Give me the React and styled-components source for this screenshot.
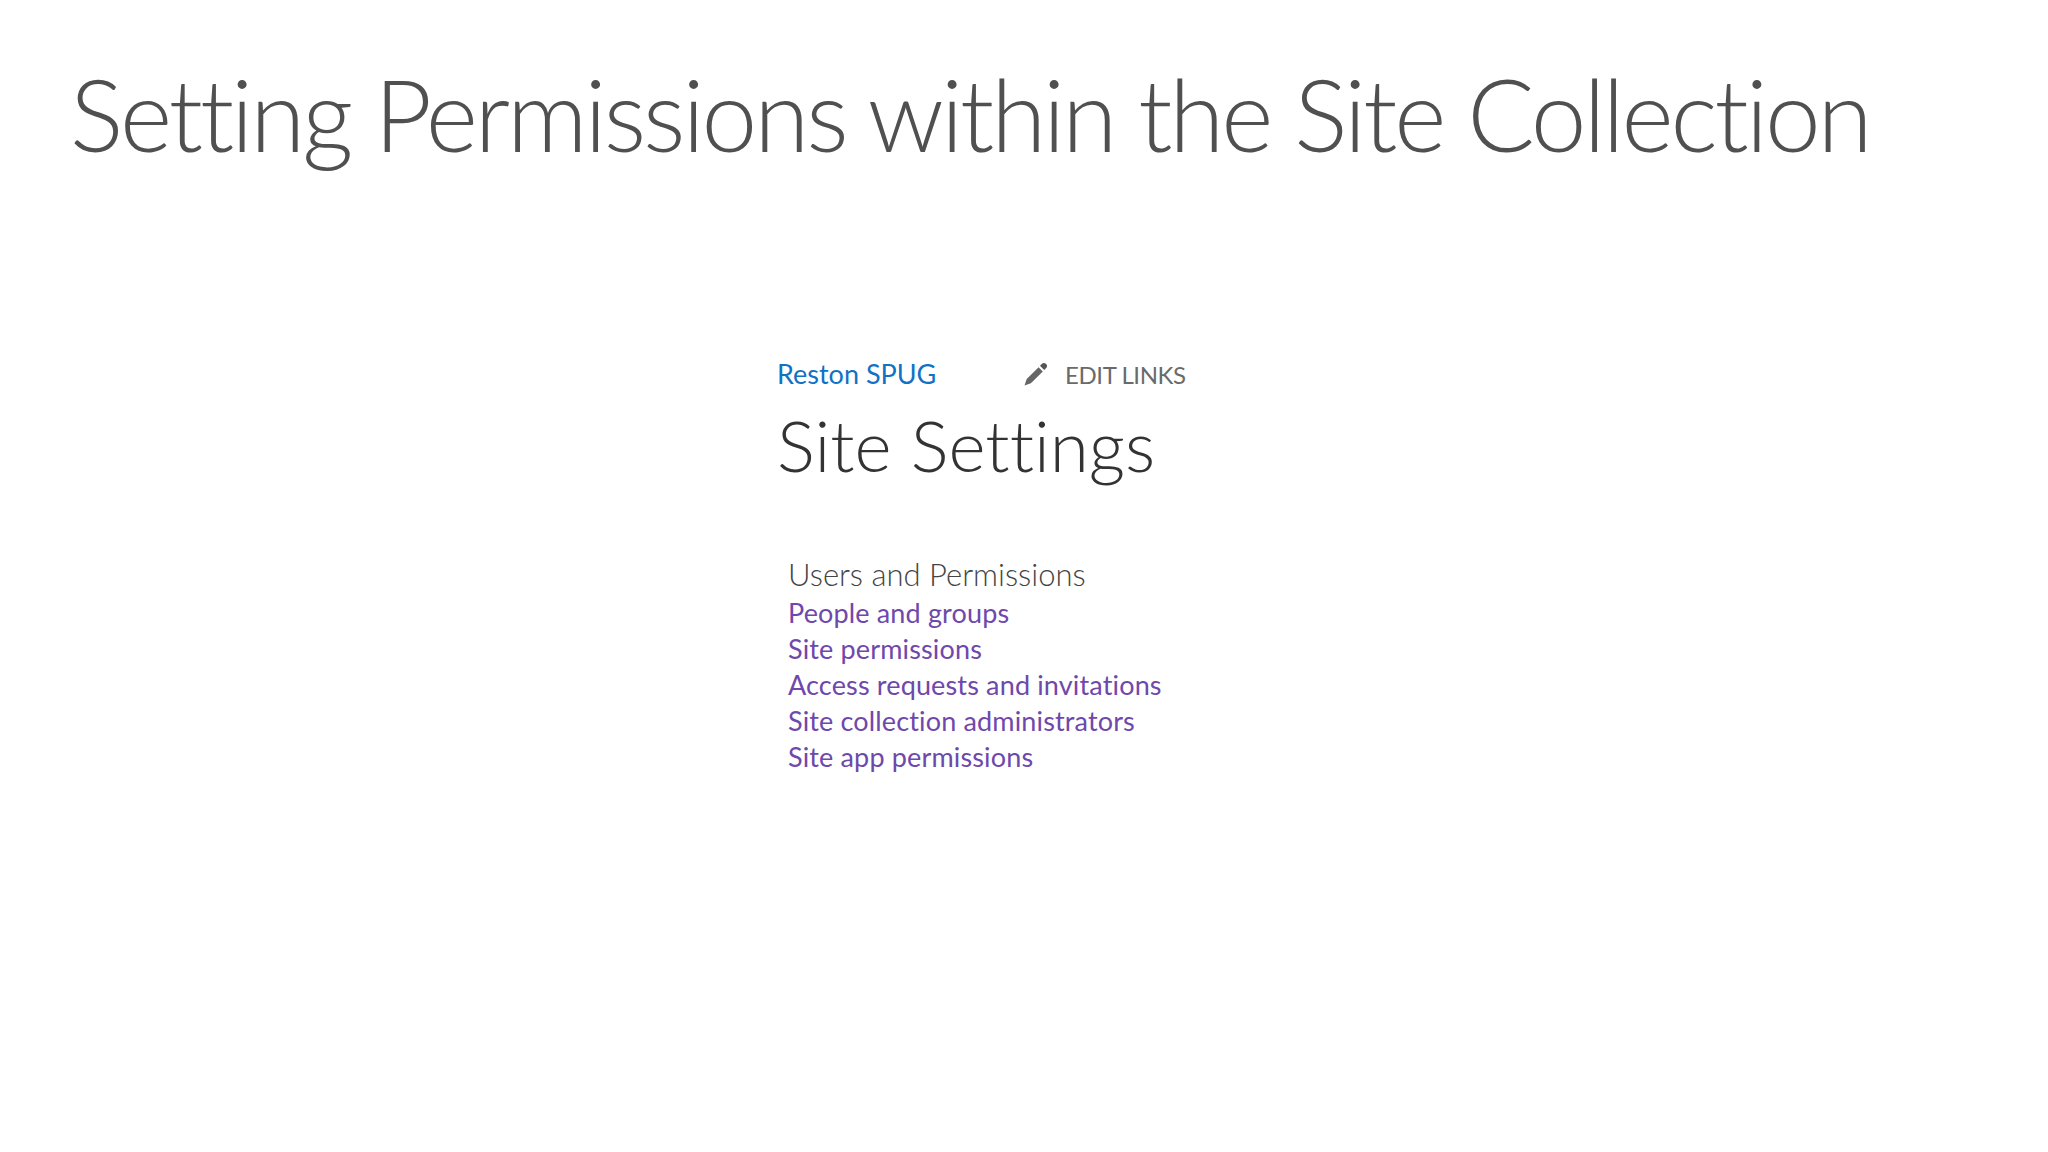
import React from "react";
import styled, { createGlobalStyle } from "styled-components";

const GlobalStyle = createGlobalStyle`
  html, body {
    margin: 0;
    background: #fff;
    font-family: Lato, "Noto Sans", "Liberation Sans", sans-serif;
    font-variant-ligatures: none;
  }
`;

const links = [
  "People and groups",
  "Site permissions",
  "Access requests and invitations",
  "Site collection administrators",
  "Site app permissions",
];

function PencilIcon() {
  return (
    <svg width="24" height="24" viewBox="0 0 24 24" aria-hidden="true">
      <path d="M0.5 23.5l2.2-6.4L14.6 5.2l4.2 4.2L6.9 21.3z" fill="#666" />
      <path d="M16 3.8l2-2c1-1 2.6-1.2 3.5-.3l1 1c.9.9.7 2.5-.3 3.5l-2 2z" fill="#555" />
    </svg>
  );
}

export default function App() {
  return (
    <Page>
      <GlobalStyle />
      <Title>Setting Permissions within the Site Collection</Title>
      <Shot>
        <TopRow>
          <SiteLink>Reston SPUG</SiteLink>
          <EditLinks>
            <PencilIcon />
            <span>EDIT LINKS</span>
          </EditLinks>
        </TopRow>
        <Heading>Site Settings</Heading>
        <Group>
          <GroupTitle>Users and Permissions</GroupTitle>
          {links.map((l) => (
            <GroupLink key={l}>{l}</GroupLink>
          ))}
        </Group>
      </Shot>
    </Page>
  );
}

const Page = styled.div`
  width: 2048px;
  height: 1152px;
  overflow: hidden;
  padding: 48px 0 0 70px;
  box-sizing: border-box;
`;

const Title = styled.h1`
  margin: 0;
  font-size: 100px;
  line-height: 130px;
  font-weight: 300;
  letter-spacing: -3.1px;
  color: #505050;
  white-space: nowrap;
`;

const Shot = styled.div`
  margin: 175px 0 0 707px;
  width: 500px;
`;

const TopRow = styled.div`
  display: flex;
  align-items: center;
  height: 42px;
`;

const SiteLink = styled.a`
  width: 247px;
  margin-top: -2px;
  font-size: 27px;
  color: #0f72c4;
`;

const EditLinks = styled.div`
  display: flex;
  align-items: center;
  gap: 17px;
  font-size: 24px;
  letter-spacing: -0.4px;
  color: #6a6a6a;
`;

const Heading = styled.h2`
  margin: 6px 0 0;
  font-size: 71px;
  line-height: 88px;
  font-weight: 300;
  color: #333;
`;

const Group = styled.div`
  margin: 65px 0 0 11px;
  display: flex;
  flex-direction: column;
`;

const GroupTitle = styled.div`
  font-size: 31px;
  line-height: 41px;
  font-weight: 300;
  color: #444;
`;

const GroupLink = styled.a`
  font-size: 27px;
  line-height: 36px;
  letter-spacing: 0.15px;
  color: #6f48ab;
`;
